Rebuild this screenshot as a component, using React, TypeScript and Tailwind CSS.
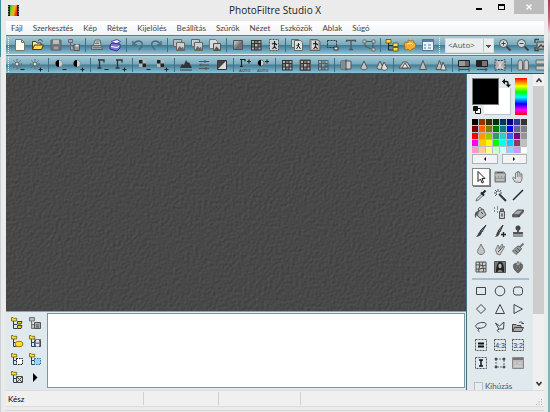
import type { ReactNode } from "react";
import clsx from "clsx";

type Tool = { label: string; icon: ReactNode };

const menus = ["Fájl", "Szerkesztés", "Kép", "Réteg", "Kijelölés", "Beállítás", "Szűrők", "Nézet", "Eszközök", "Ablak", "Súgó"];

const palette = [
    "#000000", "#993300", "#333300", "#003300", "#003366", "#000080", "#333399", "#333333",
    "#800000", "#ff6600", "#808000", "#008000", "#008080", "#0000ff", "#666699", "#808080",
    "#ff0000", "#ff9900", "#99cc00", "#339966", "#33cccc", "#3366ff", "#800080", "#969696",
    "#ff00ff", "#ffcc00", "#ffff00", "#00ff00", "#00ffff", "#00ccff", "#993366", "#c0c0c0",
    "#ff99cc", "#ffcc99", "#ffff99", "#ccffcc", "#ccffff", "#99ccff", "#cc99ff", "#ffffff",
];

function Glyph({ children }: { children: ReactNode }) {
    return (
        <svg viewBox="0 0 14 14" className="size-[14px] shrink-0 overflow-visible" fill="none" stroke="#444" aria-hidden="true">
            {children}
        </svg>
    );
}

/* Shared pieces of the toolbar drawings */
const plus = <path d="M9.500 11.500h4M11.500 9.500v4" stroke="#222" />;
const minus = <path d="M9.500 11.500h4" stroke="#222" />;
const sun = (
    <>
        <circle cx="6" cy="6" r="2" fill="#d5dde0" stroke="#555" />
        <path d="M6 1v1.500M6 9.500V11M1 6h1.500M9.500 6H11M2.500 2.500l1 1M8.500 8.500l1 1M9.500 2.500l-1 1M3.500 8.500l-1 1" stroke="#555" />
    </>
);
const contrast = (
    <>
        <circle cx="6" cy="5.500" r="3.500" fill="#c8d0d3" stroke="#778" strokeWidth=".6" />
        <path d="M6 2a3.500 3.500 0 0 0 0 7z" fill="#000" stroke="none" />
    </>
);
const gamma = <path d="M3 2h6v2.500M4.500 2v8M2.500 10h4" stroke="#333" strokeWidth="1.300" />;
const checker = (
    <>
        <path d="M2 2h7v7H2z" fill="#b3b8ba" stroke="none" />
        <path d="M2 2h3.500v3.500H2zM5.500 5.500H9V9H5.500z" fill="#222" stroke="none" />
    </>
);
const folder = (
    <>
        <path d="M1.500 11.500v-8h3.500l1 1.500h4v2" fill="#f7e9a0" stroke="#443d20" />
        <path d="M1.500 11.500l2-4.500h9l-2 4.500z" fill="#ffd84f" stroke="#443d20" />
        <path d="M7 2.500c2-1.500 4-1 4.500 1" />
    </>
);
const pictures = (
    <>
        <path d="M1.500 1.500h8v7h-8z" fill="#b9bdbf" stroke="#666" />
        <path d="M4.500 4.500h8v8h-8z" fill="#ccd0d1" stroke="#666" />
        <path d="M5 12l2.500-4 2 2 1.500-1.500L12 12z" fill="#666" stroke="none" />
    </>
);
const person = <path d="M7.500 3v2M5 6l2.500-1 2.500 2M7.500 5.500v3L5.500 11M7.500 8.500l2 2.500" stroke="#222" strokeWidth="1.200" />;
const grid = (
    <>
        <path d="M2 2h10.500v10.500H2z" fill="#333" stroke="none" />
        <path d="M3 3h2v2H3zM9.500 3h2v2h-2zM6 6h2.500v2.500H6zM3 9.500h2v2H3zM9.500 9.500h2v2h-2z" fill="#b5b5b5" stroke="none" />
        <path d="M6 3h2.500v2H6zM3 6h2v2.500H3zM9.500 6h2v2.500h-2zM6 9.500h2.500v2H6z" fill="#777" stroke="none" />
    </>
);
const drop = <path d="M7 3l3 6.500c.5 3-6.500 3-6 0z" fill="#bdc3c5" stroke="#555" />;
const drops = (
    <>
        <path d="M5 3L8 9.500c0 2.500-6 2.500-6 0z" fill="#ccc" stroke="#555" />
        <path d="M9 4l3.500 6c0 3-6 3-6 0z" fill="#ddd" stroke="#555" />
    </>
);
const auto = <text x="1" y="13.500" fontSize="4" fontFamily="Liberation Sans" fontWeight="700" fill="#555" stroke="none">AUTO</text>;

const fileBar: Tool[][] = [
    [
        { label: "Új", icon: <><path d="M2.500 1.500h6l3 3v8h-9z" fill="#fffdf2" stroke="#776" /><path d="M8.500 1.500v3h3" stroke="#776" /></> },
        { label: "Megnyitás", icon: folder },
        { label: "Mentés", icon: <><path d="M2 2h10v10H2z" fill="#777b80" stroke="#60656a" /><path d="M4 2h6v4H4z" fill="#b8bdc0" stroke="none" /><path d="M4 8h6v4H4z" fill="#9ba1a5" stroke="#62676a" /></> },
        { label: "Mentés másként", icon: <><path d="M1.500 1.500h4v3h-4zM3.500 5v7h3M3.500 7.500H7" stroke="#666" fill="#aaa" /><path d="M7 6.500h5.500v6H7z" fill="#999" stroke="#555" /><path d="M8.500 6.500h3v2h-3z" fill="#ddd" stroke="none" /></> },
    ],
    [
        { label: "Nyomtatás", icon: <><path d="M3.500 7l1.500-5h5l1 5" fill="#d4d7d9" stroke="#666" /><path d="M1.500 7.500h10l1 4h-11z" fill="#999ea1" stroke="#5d6265" /><path d="M3 9.500h8M5.500 4h4M5 5.500h4" stroke="#777" /></> },
        { label: "Lapolvasó", icon: <><path d="M3 3.500l6-2 3.500 2L8 6z" fill="#efeefb" stroke="#554ba5" /><path d="M2 7l2-2 8 1v4l-3 3-7-2z" fill="#8074d2" stroke="#372f85" /><path d="M3 8.500l6 1 2.500-1.500" stroke="#fff" /></> },
    ],
    [
        { label: "Visszavonás", icon: <><path d="M3 6c3-5 10-3 8 2l-3 4" stroke="#4c6b79" strokeWidth="1.400" /><path d="M2 3v4h4" stroke="#4c6b79" strokeWidth="1.400" /></> },
        { label: "Ismét", icon: <><path d="M11 6C8 1 1 3 3 8l3 4" stroke="#4c6b79" strokeWidth="1.400" /><path d="M12 3v4H8" stroke="#4c6b79" strokeWidth="1.400" /></> },
    ],
    [
        { label: "Másolás", icon: pictures },
        { label: "Beillesztés", icon: <>{pictures}<path d="M2 3h5M2 5h2" stroke="#eee" strokeDasharray="1 1" /></> },
        { label: "Kettőzés", icon: <><path d="M1.500 1.500h6l2 2v7h-8z" fill="#d9dcdd" stroke="#777" /><path d="M5.500 5.500h7v7h-7z" fill="#ccc" stroke="#555" /><path d="M6 12l2.500-3.500L12 12z" fill="#555" stroke="none" /></> },
    ],
    [
        { label: "Átmenet", icon: <><path d="M2.500 2.500h9v9h-9z" fill="#8a8e90" stroke="#555" /><path d="M3 11L11 3v8z" fill="#707375" stroke="none" /><path d="M3 3h5L3 8z" fill="#b0b2b4" stroke="none" /></> },
        { label: "Indexelt színek", icon: grid },
        { label: "Átlátszóság", icon: <><path d="M2.500 1.500h9v11h-9z" fill="#d0d4d5" stroke="#555" strokeDasharray="2 1" />{person}</> },
    ],
    [
        { label: "Képméret", icon: <><path d="M1.500 1.500h7v8h-7z" fill="#ccc" stroke="#666" /><path d="M4.500 2.500h6l2 2v8h-8z" fill="#e1e4e5" stroke="#666" /><path d="M8.500 5v3l-2 3M8.500 8l2 3M6.500 7.500l3-1" stroke="#222" /></> },
        { label: "Vászonméret", icon: <><path d="M2 1.500h7l3 2v9H2z" fill="#aaa" stroke="#666" /><path d="M4 3h6v8H4z" fill="#ddd" stroke="none" />{person}</> },
        { label: "Kijelölés megjelenítése", icon: <><path d="M1.500 2.500h9v7h-9z" stroke="#333" strokeDasharray="2 1" /><path d="M8 9h4v3H8z" fill="#ddd" stroke="#333" /></> },
        { label: "Szöveg", icon: <path d="M2.500 4V2.500h9V4M7 2.500v9M5 11.500h4" stroke="#555" strokeWidth="1.300" /> },
        { label: "Alakzat", icon: <><path d="M2 3.500h9M3 5v3l6 3M11 4v8" stroke="#555" /><path d="M1 2h3v3H1zM10 2h3v3h-3zM10 10h3v3h-3z" fill="#ccc" stroke="#555" strokeWidth=".7" /></> },
    ],
    [
        { label: "Képböngésző", icon: <><path d="M3.500 5v7H8M3.500 7.500H8" stroke="#222" /><path d="M1 1.500h5v3.500H1zM8 5h5v3.500H8zM8 9.500h5V13H8z" fill="#ffdc35" stroke="#554a14" strokeWidth=".8" /></> },
        { label: "Beépülők", icon: <><path d="M2 4l3 1V2l3 1 2-1 1 3 2 1-1 4-3 1-2 2-2-2-3 1V8L1 7z" fill="#f4ae28" stroke="#9a671b" strokeWidth=".7" /><path d="M4 6l4-1 2 2" stroke="#fff0a0" /></> },
        { label: "Beállítások", icon: <><path d="M1.500 1.500h11v11h-11z" fill="#edf2f8" stroke="#54738f" /><path d="M2 3h10" stroke="#597eae" strokeWidth="2" /><path d="M3 7h2M3 10h2M7 7h3M7 10h3" stroke="#7da6c0" strokeWidth="1.500" /></> },
    ],
];

const lens = <><circle cx="5.500" cy="5.500" r="4" fill="#ccd9de" stroke="#4d5558" /><path d="M8.500 8.500l4 4" stroke="#444" strokeWidth="2" /></>;

const zoomTools: Tool[] = [
    { label: "Nagyítás", icon: <>{lens}<path d="M3.500 5.500h4M5.500 3.500v4" /></> },
    { label: "Kicsinyítés", icon: <>{lens}<path d="M3.500 5.500h4" /></> },
    { label: "Teljes nézet", icon: <><path d="M3 4h9v7H3z" fill="#bbb" /><path d="M1 5V1.500h4M1 9v3.500h4M4 10l3-3 2 2 3-3" strokeWidth="1.300" /></> },
];

const adjustBar: Tool[][] = [
    [
        { label: "Fényerő csökkentése", icon: <>{sun}{minus}</> },
        { label: "Fényerő növelése", icon: <>{sun}{plus}</> },
    ],
    [
        { label: "Kontraszt csökkentése", icon: <>{contrast}{minus}</> },
        { label: "Kontraszt növelése", icon: <>{contrast}{plus}</> },
    ],
    [
        { label: "Gamma csökkentése", icon: <>{gamma}{minus}</> },
        { label: "Gamma növelése", icon: <>{gamma}{plus}</> },
    ],
    [
        { label: "Telítettség csökkentése", icon: <>{checker}{minus}</> },
        { label: "Telítettség növelése", icon: <>{checker}{plus}</> },
    ],
    [
        { label: "Hisztogram", icon: <><path d="M1 10l2-4 2 1 2-5 2 3 1-1 3 6z" fill="#333" stroke="none" /><path d="M1 12h12" /></> },
        { label: "Szintek", icon: <path d="M2 3.500h10M2 7h10M2 10.500h10M8 2v3M4 5.500v3M9 9v3" stroke="#555" /> },
        { label: "Negatív", icon: <><path d="M2.500 2.500h9v9h-9z" fill="#ddd" stroke="#333" /><path d="M2.500 2.500h9l-9 9z" fill="#444" stroke="none" /></> },
    ],
    [
        { label: "Automatikus szintek", icon: <><path d="M2 1.500h5v2M3.500 1.500v7M2 8.500h3M9 3.500h4M11 1.500v4" stroke="#222" strokeWidth="1.200" />{auto}</> },
        { label: "Automatikus kontraszt", icon: <><circle cx="5" cy="5" r="3" fill="#c5d1d5" stroke="#444" strokeWidth=".6" /><path d="M5 2a3 3 0 0 0 0 6z" fill="#000" stroke="none" /><path d="M9 3.500h4M11 1.500v4" stroke="#222" />{auto}</> },
    ],
    [
        { label: "Szürkeárnyalat", icon: grid },
        { label: "Régi fotó", icon: <>{grid}<path d="M2 2h10.500v10.500H2z" stroke="#555" /></> },
        { label: "Portalanítás", icon: <g opacity=".6">{grid}</g> },
    ],
    [
        { label: "Lágyítás", icon: <><path d="M2 3h10v8H2z" fill="#c4c9cb" stroke="#555" /><path d="M6.500 3v8H2V3z" fill="#858a8c" stroke="none" /><path d="M7 1.500v11" /></> },
        { label: "Elmosás", icon: drop },
        { label: "Erősebb elmosás", icon: drops },
    ],
    [
        { label: "Élesítés", icon: <><path d="M1 10l4-6h4l4 6z" fill="#c5cacc" stroke="#555" /><path d="M4 10l3-5 3 5z" fill="#eee" stroke="#555" /></> },
        { label: "Háromszög", icon: <path d="M7 2.500l3.500 9h-7z" fill="#b9bec0" stroke="#555" /> },
        { label: "Erősebb élesítés", icon: <><path d="M5.500 2.500L9 11.500H2z" fill="#b9bec0" stroke="#555" /><path d="M9 4l3.500 8h-6z" fill="#d9dcdd" stroke="#555" /></> },
    ],
    [
        { label: "Vízszintes átmenet", icon: <><path d="M1.500 2.500h11v6h-11z" fill="#999" stroke="#222" /><path d="M8 3h4v5H8z" fill="#666" stroke="none" /><path d="M2 11.500h10M2 9.500v4M12 9.500v4" /></> },
        { label: "Sötét átmenet", icon: <><path d="M1.500 2.500h11v6h-11z" fill="#222" stroke="#222" /><path d="M7 3h5v5H7z" fill="#777" stroke="none" /><path d="M2 11.500h10M10 9.500l2 2-2 2" /></> },
        { label: "Torzítás", icon: <><path d="M2 1.500l2 1h6l2-1v11l-2-1H4l-2 1z" fill="#a8adaf" stroke="#444" strokeDasharray="2 1" /><path d="M4 3l6 8M10 3l-6 8M7 3v8" stroke="#ddd" /></> },
    ],
    [
        { label: "Vízszintes tükrözés", icon: <path d="M2 4l1-2h2.500l1 2v8H2zM8 4l1-2h2.500l1 2v8H8z" fill="#c3c8ca" stroke="#666" /> },
        { label: "Függőleges tükrözés", icon: <path d="M2 2h8l2.500 1.500v1L10 6H2zM2 8h8l2.500 1.500v1L10 12H2z" fill="#c3c8ca" stroke="#666" /> },
    ],
];

const paintTools: Tool[] = [
    { label: "Kijelölés", icon: <path d="M4 1.500v10l2.500-2.500 1.500 4 1.500-.7L8 8.500h3z" fill="#fff" stroke="#222" /> },
    { label: "Rétegkezelő", icon: <><path d="M2 2h9l1.500 2v8H2z" fill="#999" stroke="#777" /><path d="M2 5h10M3 7h2M6 7h2M9 7h2M3 10h8" stroke="#ddd" /><path d="M4 2.500h6" stroke="#555" /></> },
    { label: "Kéz", icon: <><path d="M4 12L1.500 8 2.500 7l2 1.500V3l1-.5 1 .5V1.500h1.500V3l1-.5.8 1L11 4v5l-1.500 3.500z" fill="#d8d8d8" stroke="#666" strokeWidth=".8" /><path d="M6.500 3v4M8.200 3v4M9.800 4v3" stroke="#777" strokeWidth=".7" /></> },
    { label: "Pipetta", icon: <><path d="M8 5.500L3 10.500 2 13l2.500-1 5-5z" fill="#ccc" stroke="#555" strokeWidth=".8" /><path d="M7 4.500l3 3M8.500 5.500l3-3" stroke="#222" strokeWidth="2" /></> },
    { label: "Varázspálca", icon: <><path d="M6 6l7 7" stroke="#333" strokeWidth="2" /><path d="M5 1v3M1 5h3M2 2l2 2M8 2L6.500 4M2 8l2-2M7 5h2" stroke="#555" /></> },
    { label: "Vonal", icon: <path d="M2 12L12 2" stroke="#222" strokeWidth="1.400" /> },
    { label: "Kitöltés", icon: <><path d="M4 5l5-2 3 6-5 3.500L3.500 10z" fill="#bbb" stroke="#555" /><path d="M5 6C3 2 6 0 8 3M7 6l2 2" stroke="#444" /><path d="M3.500 5C1 6 0 9 1.500 12c1-2 1-4 3-5z" fill="#555" stroke="none" /></> },
    { label: "Festékszóró", icon: <><path d="M6.500 5.500h5v7h-5z" fill="#ccc" stroke="#555" /><path d="M7.500 3h3v2.500h-3z" fill="#888" stroke="#555" /><path d="M8 7.500h2v3H8z" fill="#777" stroke="none" /><path d="M1 2h1M4 1h1M4 3h1M1 5h1M4 6h1" stroke="#333" /></> },
    { label: "Radír", icon: <><path d="M1.500 9l5-5h6L8 9z" fill="#aaa" stroke="#444" /><path d="M1.500 9H8v2H1.500zM8 9l4.500-5v2L8 11z" fill="#666" stroke="#444" strokeWidth=".6" /></> },
    { label: "Ecset", icon: <><path d="M12 1L6 7l2 1z" fill="#888" stroke="#333" /><path d="M6 7l2 1.500c-1 3-3 4-6 4.500C4 11 4 9 6 7z" fill="#444" stroke="none" /></> },
    { label: "Speciális ecset", icon: <><path d="M10 1L5 7l2 1z" fill="#888" stroke="#333" /><path d="M5 7l2 1.500c-1 3-2 4-5 4.500C4 11 3 9 5 7z" fill="#444" stroke="none" /><path d="M8 10.500h5M10.500 8v5" stroke="#222" strokeWidth="1.400" /></> },
    { label: "Pecsét", icon: <><circle cx="7" cy="4" r="2.500" fill="#444" stroke="none" /><path d="M6 5h2v3h4v2.500H2V8h4z" fill="#555" stroke="none" /><path d="M2 12h10" stroke="#444" /></> },
    { label: "Elmosás eszköz", icon: <path d="M7 2C6 5 3.500 7 3.500 9.500c0 4 7 4 7 0C10.500 7 8 5 7 2z" fill="#c2c4c5" stroke="#777" /> },
    { label: "Maszatolás", icon: <><path d="M4 12L2.500 8 5 3l1 1v3l3-5 1 1-2 4 3-3 .5 1-3 5-1.500 3z" fill="#ccc" stroke="#666" strokeWidth=".8" /><path d="M5 10l3-3" /></> },
    { label: "Művészi ecset", icon: <><path d="M12.500 1.500L9 5" strokeWidth="2" stroke="#777" /><path d="M8 4l2.500 2.500-1 2L5 12.500 1.500 9 6 4.500z" fill="#999" stroke="#666" /><path d="M4 8l3 3M6 6l3 3" stroke="#555" /></> },
    { label: "Rács torzítás", icon: <><path d="M2 2h10v10H2z" fill="#ccc" stroke="#555" /><path d="M5 2c2 3-1 7 0 10M9 2c-2 4 2 7 0 10M2 5c4-1 6 2 10 0M2 9c4 1 6-2 10 0" stroke="#444" /></> },
    { label: "Portré", icon: <><path d="M1.500 1.500h11v11h-11z" fill="#777" stroke="#555" /><path d="M3 12c0-14 9-13 8 0z" fill="#222" stroke="none" /><ellipse cx="7" cy="6" rx="1.600" ry="2.200" fill="#bbb" stroke="none" /><path d="M4.500 12c1-3 4-3 5 0z" fill="#888" stroke="none" /></> },
    { label: "Eper", icon: <><path d="M3 4l4-1 4 1c2 3-1 7-4 9-3-2-6-6-4-9z" fill="#666" stroke="#555" strokeWidth=".7" /><path d="M4 3l2 .5L7 1l1 2 2-.5-2 3H6z" fill="#aaa" stroke="#666" strokeWidth=".6" /><path d="M5 7h1M8 7h1M6 9.500h1" stroke="#999" /></> },
];

const dashedBox = <path d="M1.500 1.500h11v11h-11z" stroke="#555" strokeDasharray="2 1" />;
const ratioText = (value: string) => (
    <>
        {dashedBox}
        <text x="7" y="9.500" textAnchor="middle" fontSize="7" fontFamily="Liberation Sans" fill="#333" stroke="none">{value}</text>
    </>
);

const shapeTools: Tool[] = [
    { label: "Téglalap", icon: <path d="M2.500 3.500h9v7h-9z" /> },
    { label: "Ellipszis", icon: <circle cx="7" cy="7" r="4.800" /> },
    { label: "Lekerekített téglalap", icon: <rect x="2.500" y="3" width="9" height="8" rx="2.500" /> },
    { label: "Rombusz", icon: <path d="M7 2.500L11.500 7 7 11.500 2.500 7z" /> },
    { label: "Háromszög kijelölés", icon: <path d="M7 2.500l4.500 9h-9z" /> },
    { label: "Jobbra háromszög", icon: <path d="M3 2.500L11.500 7 3 11.500z" /> },
    { label: "Lasszó", icon: <path d="M4 8.500C1 7.500 1 5 4 3.500c4-2 9-1 8 1.500C11.500 7.500 8 8 5 8.500M4 8.500c0-1 2-1 1.500 0s-1.500 1-1.500 0M4.500 9.500c-1 1 0 2 1 2.500" /> },
    { label: "Sokszög", icon: <path d="M2.500 3L6.500 6l4.500-4-.5 7H6L2.500 3zM6 9l-2 1.500 2 2" /> },
    { label: "Alakzat betöltése", icon: <><path d="M1.500 11.500v-7H5l1 1h4v2M1.500 11.500l2-4h9l-2 4z" fill="#aaa" /><path d="M8 3c1-2 4-1 4 1M10.500 3.500H13" /></> },
    { label: "Egyéni arány", icon: <>{dashedBox}<path d="M4 5.500h6M4 8.500h6" stroke="#111" strokeWidth="1.800" /></> },
    { label: "Arány 4:3", icon: ratioText("4:3") },
    { label: "Arány 3:2", icon: ratioText("3:2") },
    { label: "Szövegkijelölés", icon: <>{dashedBox}<path d="M5 4h4M7 4v6M5 10h4" stroke="#111" strokeWidth="1.500" /></> },
    { label: "Átalakítás", icon: <><path d="M3 3h8v8H3z" stroke="#666" strokeDasharray="2 1" /><path d="M2 2h2v2H2zM10 2h2v2h-2zM2 10h2v2H2zM10 10h2v2h-2z" fill="#555" strokeWidth=".5" /></> },
    { label: "Kijelölés beállításai", icon: <><path d="M1.500 1.500h11v11h-11z" fill="#bbb" stroke="#888" /><path d="M2 3h10" stroke="#777" strokeWidth="2" /><path d="M3 7h2M7 7h3M3 10h7" stroke="#ddd" /></> },
];

const tree = (
    <>
        <path d="M3.500 5v7.500H7M3.500 8.500H7" stroke="#26405c" />
        <path d="M1.500 1.500H3l.7.8h3V5H1.500z" fill="#ffde27" stroke="#6b5b12" strokeWidth=".8" />
    </>
);

const explorerTools: Tool[] = [
    { label: "Mappa", icon: <>{tree}<path d="M7.500 5.500H12l-1 2.500H7.500zM7.500 9.500H12l-1 3H7.500z" fill="#e5d338" stroke="#464014" /></> },
    { label: "Képek", icon: <><path d="M3.500 5v7.500H7M3.500 8.500H7M1.500 1.500h5V5h-5z" fill="#bbb" stroke="#777" /><path d="M6.500 6.500h6v6h-6z" fill="#aaa" stroke="#555" /><path d="M8 9h3M8 11h3" stroke="#555" /></> },
    { label: "Minta", icon: <>{tree}<ellipse cx="9" cy="10" rx="4" ry="2.800" fill="#ffdd26" stroke="#9b7b17" /></> },
    { label: "Mentett kép", icon: <>{tree}<path d="M6.500 6.500h6v6h-6z" fill="#767d9b" stroke="#404661" /><path d="M6 5.500h7" stroke="#e44d4d" /><path d="M8 6h3v2.500H8z" fill="#f3dcdc" stroke="none" /><path d="M8 10h3v2.500H8z" fill="#eee" stroke="none" /></> },
    { label: "Kijelölések", icon: <>{tree}<path d="M6.500 6.500h6v6h-6z" fill="#fff" stroke="#111" strokeDasharray="1.500 1" /></> },
    { label: "Maszkok", icon: <>{tree}<path d="M6.500 6.500h6v6h-6z" fill="#9ed2ef" stroke="#28729e" strokeDasharray="1.500 1" /></> },
    { label: "Minták", icon: <>{tree}<path d="M6.500 6.500h6v6h-6z" fill="#ddd" stroke="#444" /><path d="M7 7l5 5M12 7l-5 5" stroke="#444" /></> },
    { label: "Tovább", icon: <path d="M5 3l4.500 4.500L5 12z" fill="#000" stroke="none" /> },
];

function ToolButton({ tool, active = false }: { tool: Tool; active?: boolean }) {
    return (
        <button
            type="button"
            aria-label={tool.label}
            className={clsx(
                "flex h-[18px] w-[18px] shrink-0 items-center justify-center",
                active && "border border-[#888] bg-white shadow-[1px_1px_0_#777]"
            )}
        >
            <Glyph>{tool.icon}</Glyph>
        </button>
    );
}

function Separator({ wide = false }: { wide?: boolean }) {
    return (
        <span className={clsx("flex shrink-0 justify-center", wide ? "w-[6px]" : "w-[5px]")}>
            <span className="h-[14px] w-px bg-[#426f82]" />
        </span>
    );
}

function Grip() {
    return <span className="h-[15px] w-px shrink-0 bg-[repeating-linear-gradient(#f4fbfd_0_1px,transparent_1px_2px)]" />;
}

function ToolGroups({ groups, widePairs = false }: { groups: Tool[][]; widePairs?: boolean }) {
    return (
        <>
            {groups.map((group, index) => (
                <div key={index} className="flex shrink-0 items-center">
                    {group.map((tool) => (
                        <ToolButton key={tool.label} tool={tool} />
                    ))}
                    {index < groups.length - 1 && <Separator wide={widePairs && group.length === 2} />}
                </div>
            ))}
        </>
    );
}

function TitleBar() {
    return (
        <header className="grid h-[21px] shrink-0 grid-cols-[1fr_auto_1fr] items-start">
            <svg viewBox="0 0 11 11" className="mt-[5px] ml-[2px] size-[11px]" aria-hidden="true">
                <defs>
                    <linearGradient id="film" x1="0" y1="0" x2="1" y2=".4">
                        <stop offset="0" stopColor="#21b24b" />
                        <stop offset=".4" stopColor="#9bd320" />
                        <stop offset=".7" stopColor="#ffae17" />
                        <stop offset="1" stopColor="#e33b1c" />
                    </linearGradient>
                </defs>
                <path d="M0 0h11v11H0z" fill="#1d1d10" />
                <path d="M2 0h7v11H2z" fill="url(#film)" />
                <path d="M.7 1v10M10.300 1v10" stroke="#ddd" strokeWidth=".7" strokeDasharray="1 1.500" />
            </svg>
            <h1 className="pt-[3px] font-['Open_Sans','Noto_Sans',sans-serif] text-[10px] leading-[15px] text-[#222]">PhotoFiltre Studio X</h1>
            <div className="flex justify-end">
                <button type="button" aria-label="Kis méret" className="flex h-[14px] w-[26px] items-end justify-center pb-[4px]">
                    <span className="h-[2px] w-[6px] bg-black" />
                </button>
                <button type="button" aria-label="Teljes méret" className="flex h-[14px] w-[18px] items-center justify-center">
                    <span className="h-[6px] w-[7px] border border-t-2 border-black" />
                </button>
                <button type="button" aria-label="Bezárás" className="ml-[4px] flex h-[14px] w-[30px] items-center justify-center bg-[#bcbcbc]">
                    <svg viewBox="0 0 6 6" className="size-[6px]" stroke="#fff" strokeWidth="1.400">
                        <path d="M.5.5l5 5M5.500.5l-5 5" />
                    </svg>
                </button>
            </div>
        </header>
    );
}

function ColourPanel() {
    return (
        <>
            <div className="flex h-[37px] w-[55px] justify-between">
                <div className="relative w-[39px]">
                    <button type="button" aria-label="Háttérszín" className="absolute right-0 bottom-0 size-[27px] border-r border-b border-[#bbc4c8] bg-white" />
                    <button type="button" aria-label="Előtérszín" className="absolute top-0 left-0 size-[27px] border border-[#777] bg-black" />
                    <button type="button" aria-label="Színek cseréje" className="absolute top-0 right-0 size-[10px]">
                        <svg viewBox="0 0 10 10" fill="none" stroke="#111" strokeWidth="1.400">
                            <path d="M2 3.500h3.500Q7 3.500 7 5v3" />
                            <path d="M4 .5L1 3.500l3 3zM4.500 6.500l3 3 2.500-3z" fill="#111" stroke="none" />
                        </svg>
                    </button>
                    <button type="button" aria-label="Alapértelmezett színek" className="absolute bottom-[1px] left-[1px] size-[8px]">
                        <svg viewBox="0 0 8 8" stroke="#111">
                            <path d="M2.500 2.500h5v5h-5z" fill="#fff" />
                            <path d="M.5.5h4v4h-4z" fill="#111" />
                        </svg>
                    </button>
                </div>
                <button
                    type="button"
                    aria-label="Színskála"
                    className="w-[12px] bg-[linear-gradient(#f00,#ff0_22%,#0f0_38%,#0ff_52%,#00f_70%,#f0f_86%,#f00)]"
                />
            </div>
            <div className="mt-1 grid h-[34px] w-[55px] grid-cols-8 grid-rows-5 gap-px bg-[#b9bfc2]">
                {palette.map((colour) => (
                    <button key={colour} type="button" aria-label={colour} style={{ backgroundColor: colour }} />
                ))}
            </div>
            <div className="mt-[1px] flex w-[55px] gap-[4px]">
                {["M4 1L2 3l2 2z", "M2 1l2 2-2 2z"].map((d, index) => (
                    <button
                        key={d}
                        type="button"
                        aria-label={index === 0 ? "Előző paletta" : "Következő paletta"}
                        className="flex h-[10px] flex-1 items-center justify-center border border-[#adb2b5] bg-[#f1f3f4]"
                    >
                        <svg viewBox="0 0 6 6" className="size-[6px]"><path d={d} /></svg>
                    </button>
                ))}
            </div>
        </>
    );
}

function ToolDock() {
    return (
        <aside className="flex shrink-0 overflow-hidden bg-[#dfe9ee]">
            <div className="w-[66px] pt-[4px] pl-[5px]">
                <ColourPanel />
                <div className="mt-[4px] grid w-[56px] grid-cols-3">
                    {paintTools.map((tool, index) => (
                        <ToolButton key={tool.label} tool={tool} active={index === 0} />
                    ))}
                </div>
                <hr className="my-[2px] w-[57px] border-t-2 border-[#a9c1cd]" />
                <div className="grid w-[56px] grid-cols-3">
                    {shapeTools.map((tool) => (
                        <ToolButton key={tool.label} tool={tool} />
                    ))}
                </div>
                <label className="mt-[8px] flex items-center gap-[2px] pl-[2px] text-[8px] leading-[12px] text-[#555]">
                    <input type="checkbox" disabled className="size-[9px] appearance-none border border-[#b9bfc2] bg-[#e8eef0]" />
                    Kihúzás
                </label>
            </div>
            <div className="flex w-[11px] flex-col bg-[#f0f0f0]">
                <button type="button" aria-label="Görgetés fel" className="flex h-[12px] shrink-0 items-center justify-center">
                    <svg viewBox="0 0 8 6" className="h-[6px] w-[8px]" fill="none" stroke="#333" strokeWidth="1.600"><path d="M1.500 5L4 2l2.500 3" /></svg>
                </button>
                <div className="flex-1">
                    <div className="h-[78%] bg-[#cdcdcd]" />
                </div>
                <button type="button" aria-label="Görgetés le" className="flex h-[12px] shrink-0 items-center justify-center">
                    <svg viewBox="0 0 8 6" className="h-[6px] w-[8px]" fill="none" stroke="#333" strokeWidth="1.600"><path d="M1.500 1L4 4l2.500-3" /></svg>
                </button>
            </div>
        </aside>
    );
}

function Workspace() {
    return (
        <main className="min-h-0 flex-1 overflow-hidden bg-[#464646]">
            {/* Leather-like grain of the empty workspace */}
            <svg className="size-full" aria-hidden="true">
                <filter id="grain" x="0" y="0" width="100%" height="100%" colorInterpolationFilters="sRGB">
                    <feTurbulence type="fractalNoise" baseFrequency=".35" numOctaves="2" seed="4" />
                    <feDiffuseLighting surfaceScale=".35" diffuseConstant=".4" lightingColor="#fff">
                        <feDistantLight azimuth="225" elevation="45" />
                    </feDiffuseLighting>
                </filter>
                <rect width="100%" height="100%" filter="url(#grain)" />
            </svg>
        </main>
    );
}

export default function App() {
    return (
        <div className="flex h-screen overflow-hidden bg-[#ebebeb] font-['Lato','Open_Sans',sans-serif]">
            <div className="w-px shrink-0 bg-[linear-gradient(#3f8f9c_57px,#c9d3d5_57px)]" />
            <div className="flex min-w-0 flex-1 flex-col pr-[4px] pl-[5px]">
                <TitleBar />
                <nav className="flex h-[14px] shrink-0 items-center gap-[10px] bg-gradient-to-b from-white to-[#f1f4f6] pl-[5px] text-[8px] leading-[14px] text-[#444]">
                    {menus.map((menu) => (
                        <button key={menu} type="button">{menu}</button>
                    ))}
                </nav>

                <div className="flex h-[20px] shrink-0 items-center overflow-hidden border-y border-t-[#4f8297] border-b-[#e4eff3] bg-[linear-gradient(#a9cbd8,#79aabd_48%,#427b92_52%,#8cc4d7)] pl-[2px]">
                    <Grip />
                    <div className="flex shrink-0 items-center pl-[2px]">
                        <ToolGroups groups={fileBar} />
                    </div>
                    <span className="w-[2px] shrink-0" />
                    <Grip />
                    <select aria-label="Nagyítás mértéke" className="mr-[2px] ml-[5px] h-[15px] w-[49px] shrink-0 appearance-none border border-[#d5dfe3] bg-[#e9eef0] bg-[linear-gradient(#555,#555),linear-gradient(#555,#555),linear-gradient(#555,#555),linear-gradient(#bcc5c9,#bcc5c9)] bg-[length:5px_1px,3px_1px,1px_1px,1px_13px] bg-[position:40px_6px,41px_7px,42px_8px,37px_0] bg-no-repeat pl-[2px] font-['Open_Sans','Noto_Sans',sans-serif] text-[8px] leading-[12px] text-[#555]">
                        <option>&lt;Auto&gt;</option>
                    </select>
                    {zoomTools.map((tool) => (
                        <ToolButton key={tool.label} tool={tool} />
                    ))}
                </div>
                <div className="flex h-[19px] shrink-0 items-center overflow-hidden border-y border-t-[#4f8297] border-b-[#315567] bg-[linear-gradient(#a9cbd8,#79aabd_48%,#427b92_52%,#8cc4d7)] pl-[2px]">
                    <Grip />
                    <ToolGroups groups={adjustBar} widePairs />
                </div>

                <div className="flex min-h-0 flex-1">
                    <div className="flex min-w-0 flex-1 flex-col border-r border-[#456d7e]">
                        <Workspace />
                        <section className="flex shrink-0 gap-[3px] border-t border-[#86a5b1] bg-[#dfe9ee] pt-px pr-px pb-[2px]">
                            <div className="grid w-[38px] grid-cols-2 pt-px pb-[2px] pl-[2px]">
                                {explorerTools.map((tool) => (
                                    <ToolButton key={tool.label} tool={tool} />
                                ))}
                            </div>
                            <textarea aria-label="Képböngésző" className="min-w-0 flex-1 resize-none border border-[#83939b] bg-white" />
                        </section>
                    </div>
                    <ToolDock />
                </div>

                <footer className="flex h-[17px] shrink-0 items-center border-y border-[#dcdcdc] bg-[#f0f0f0] text-[8px] leading-[14px] text-black">
                    <span className="w-[137px] pl-[2px]">Kész</span>
                    <span className="h-[13px] w-[75px] border-l border-[#d0d0d0]" />
                    <span className="h-[13px] w-[82px] border-l border-[#d0d0d0]" />
                    <span className="h-[13px] flex-1 border-l border-[#d0d0d0]" />
                    <svg viewBox="0 0 7 7" className="mr-px size-[7px] self-end" fill="#aaa" aria-hidden="true">
                        <path d="M5 0h1v1H5zM5 2.500h1v1H5zM2.500 2.500h1v1h-1zM5 5h1v1H5zM2.500 5h1v1h-1zM0 5h1v1H0z" />
                    </svg>
                </footer>
                <div className="mt-[3px] h-[2px] shrink-0 border-t border-[#d8d8d8]" />
            </div>
            <div className="w-[2px] shrink-0 bg-[linear-gradient(#a83a50,#c9667a_20px,#e6dfe1_34px,#7fb2b8_70px,#7fb2b8)]" />
        </div>
    );
}
